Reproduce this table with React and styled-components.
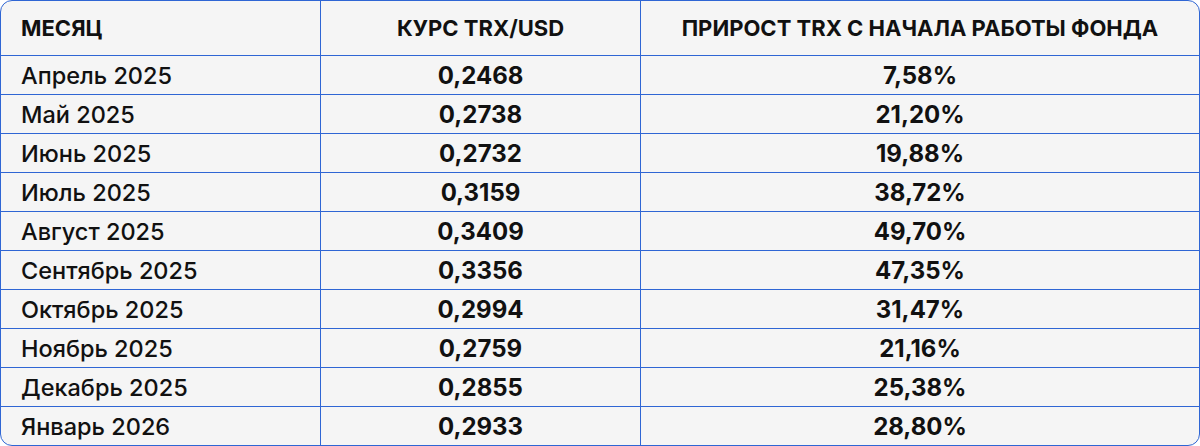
import React from 'react';
import styled, {createGlobalStyle} from 'styled-components';

const GlobalStyle = createGlobalStyle`
  html, body {
    margin: 0;
    padding: 0;
    background: #ffffff;
  }
  body {
    font-family: "Inter", "Noto Sans", Arial, sans-serif;
    color: #111111;
  }
`;

const BORDER = '#2f66d4';

const Wrap = styled.div`
  width: 1200px;
  height: 446px;
  box-sizing: border-box;
  border: 1px solid ${BORDER};
  border-radius: 12px;
  overflow: hidden;
  background: #f5f5f5;
`;

const Table = styled.table`
  width: 100%;
  border-collapse: separate;
  border-spacing: 0;
  table-layout: fixed;
`;

const Th = styled.th`
  height: 54px;
  padding: 0;
  font-size: 22px;
  font-weight: 700;
  text-transform: uppercase;
  white-space: nowrap;
  text-align: ${p => (p.$left ? 'left' : 'center')};
  padding-left: ${p => (p.$left ? '20px' : '0')};
  border-bottom: 1px solid ${BORDER};
  border-right: ${p => (p.$last ? 'none' : `1px solid ${BORDER}`)};
`;

const Td = styled.td`
  height: 38px;
  padding: 0;
  font-size: ${p => (p.$bold ? '24px' : '23.5px')};
  font-weight: ${p => (p.$bold ? 700 : 500)};
  white-space: nowrap;
  text-align: ${p => (p.$left ? 'left' : 'center')};
  padding-left: ${p => (p.$left ? '20px' : '0')};
  border-bottom: ${p => (p.$lastRow ? 'none' : `1px solid ${BORDER}`)};
  border-right: ${p => (p.$last ? 'none' : `1px solid ${BORDER}`)};
`;

const rows = [
  ['Апрель 2025', '0,2468', '7,58%'],
  ['Май 2025', '0,2738', '21,20%'],
  ['Июнь 2025', '0,2732', '19,88%'],
  ['Июль 2025', '0,3159', '38,72%'],
  ['Август 2025', '0,3409', '49,70%'],
  ['Сентябрь 2025', '0,3356', '47,35%'],
  ['Октябрь 2025', '0,2994', '31,47%'],
  ['Ноябрь 2025', '0,2759', '21,16%'],
  ['Декабрь 2025', '0,2855', '25,38%'],
  ['Январь 2026', '0,2933', '28,80%'],
];

function App() {
  return (
    <>
      <GlobalStyle />
      <Wrap>
        <Table>
          <colgroup>
            <col style={{width: 320}} />
            <col style={{width: 320}} />
            <col />
          </colgroup>
          <thead>
            <tr>
              <Th $left>Месяц</Th>
              <Th>Курс TRX/USD</Th>
              <Th $last>Прирост TRX с начала работы фонда</Th>
            </tr>
          </thead>
          <tbody>
            {rows.map(([month, rate, growth], i) => {
              const lastRow = i === rows.length - 1;
              return (
                <tr key={month}>
                  <Td $left $lastRow={lastRow}>{month}</Td>
                  <Td $bold $lastRow={lastRow}>{rate}</Td>
                  <Td $bold $last $lastRow={lastRow}>{growth}</Td>
                </tr>
              );
            })}
          </tbody>
        </Table>
      </Wrap>
    </>
  );
}

export default App;
